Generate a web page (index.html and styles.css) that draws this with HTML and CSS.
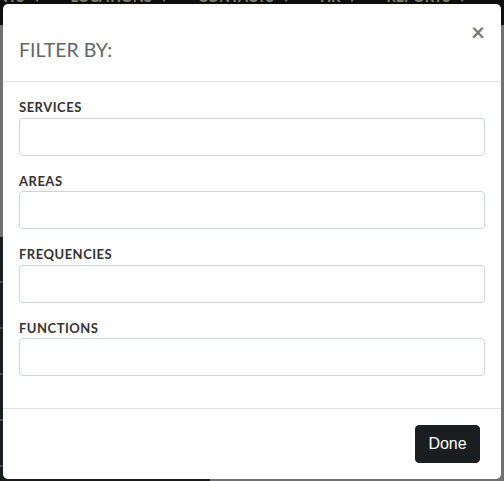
FILE: index.html
```html
<!DOCTYPE html>
<html lang="en">
<head>
<meta charset="utf-8">
<title>Filter</title>
<link rel="stylesheet" href="styles.css">
</head>
<body>
<div class="page">
  <nav class="topnav">
    <div class="nav-track">
      <span class="nav-item first">CLIENTS<span class="caret">▾</span></span>
      <span class="nav-item">LOCATIONS<span class="caret">▾</span></span>
      <span class="nav-item">CONTACTS<span class="caret">▾</span></span>
      <span class="nav-item">HR<span class="caret">▾</span></span>
      <span class="nav-item">REPORTS<span class="caret">▾</span></span>
    </div>
  </nav>
  <div class="main">
    <aside class="sidebar">
      <div class="side-item"></div>
      <div class="side-item"></div>
      <div class="side-item"></div>
      <div class="side-item"></div>
      <div class="side-item"></div>
    </aside>
    <div class="content"></div>
  </div>
</div>

<div class="modal" role="dialog">
  <div class="modal-header">
    <h5 class="modal-title">FILTER BY:</h5>
    <button class="close" type="button" aria-label="Close">×</button>
  </div>
  <div class="modal-body">
    <div class="form-group">
      <label class="form-label">SERVICES</label>
      <input class="form-input" type="text">
    </div>
    <div class="form-group">
      <label class="form-label">AREAS</label>
      <input class="form-input" type="text">
    </div>
    <div class="form-group">
      <label class="form-label">FREQUENCIES</label>
      <input class="form-input" type="text">
    </div>
    <div class="form-group">
      <label class="form-label">FUNCTIONS</label>
      <input class="form-input" type="text">
    </div>
  </div>
  <div class="modal-footer">
    <button class="btn-done" type="button">Done</button>
  </div>
</div>
</body>
</html>
```

FILE: styles.css
```css
* {
  box-sizing: border-box;
}

html, body {
  margin: 0;
  height: 481px;
  overflow: hidden;
}

body {
  position: relative;
  background: #717171;
  font-family: Lato, "Liberation Sans", Arial, sans-serif;
}

.page {
  display: flex;
  flex-direction: column;
  height: 481px;
}

.topnav {
  height: 25px;
  background: #0e0e0e;
  overflow: hidden;
  flex: none;
}

.nav-track {
  display: flex;
  margin-top: -10px;
  margin-left: -33px;
  font-size: 14.5px;
  line-height: 14px;
  font-weight: 700;
  color: #857f70;
  white-space: nowrap;
}

.nav-item {
  padding-right: 32px;
}

.caret {
  margin-left: 10px;
  font-size: 8px;
}

.main {
  flex: 1;
  display: flex;
}

.sidebar {
  width: 210px;
  margin-top: 212px;
  background: #1a1d20;
}

.side-item {
  height: 46px;
  border-bottom: 2px solid #4a4d50;
}

.content {
  flex: 1;
}

.modal {
  position: absolute;
  left: 3px;
  top: 4px;
  width: 498px;
  height: 475px;
  background: #fff;
  border-radius: 5px;
  display: flex;
  flex-direction: column;
}

.modal-header {
  height: 78px;
  padding: 16px;
  border-bottom: 1px solid #dee2e6;
  display: flex;
  align-items: flex-start;
}

.modal-title {
  margin: 15px 0 0;
  font-size: 19.5px;
  line-height: 29px;
  font-weight: 400;
  color: #666;
}

.close {
  margin-left: auto;
  margin-right: 0;
  padding: 0;
  border: 0;
  background: none;
  font-family: Lato, "Liberation Sans", Arial, sans-serif;
  font-size: 24px;
  line-height: 24px;
  font-weight: 700;
  color: #7a7a7a;
}

.modal-body {
  flex: 1;
  padding: 16px;
}

.form-group {
  margin-bottom: 16px;
}

.form-label {
  display: block;
  font-size: 13px;
  line-height: 19.5px;
  font-weight: 700;
  letter-spacing: 0.5px;
  color: #333;
}

.form-input {
  display: block;
  width: 100%;
  height: 38px;
  padding: 6px 12px;
  border: 1px solid #ced4da;
  border-radius: 4px;
  background: #fff;
}

.modal-footer {
  border-top: 1px solid #dee2e6;
  padding: 16px 21px 16px 16px;
  display: flex;
  justify-content: flex-end;
}

.btn-done {
  width: 65px;
  height: 38px;
  padding: 0 12px;
  border: 1px solid #1b1e21;
  border-radius: 4px;
  background: #1b1e21;
  color: #fff;
  font-family: "Liberation Sans", Arial, sans-serif;
  font-size: 16px;
}
```
